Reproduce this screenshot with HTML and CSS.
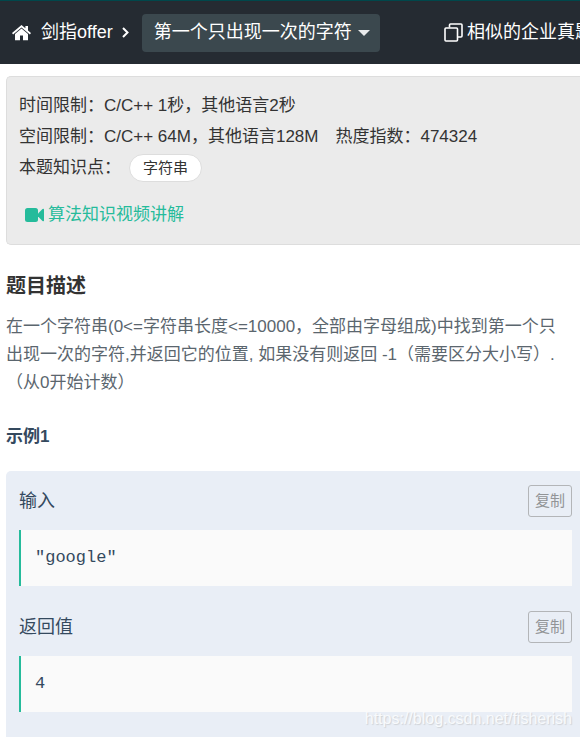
FILE: index.html
```html
<!DOCTYPE html>
<html lang="zh-CN">
<head>
<meta charset="utf-8">
<meta name="viewport" content="width=device-width, initial-scale=1">
<title>第一个只出现一次的字符</title>
<link rel="stylesheet" href="styles.css">
</head>
<body>
<header class="topbar">
  <a class="home" href="#" aria-label="首页">
    <svg width="19" height="16" viewBox="0 0 19 16" fill="#fff"><path d="M9.500 0 0 8l1.100 1.400L9.500 2.500l8.400 6.900L19 8l-3-2.500V1h-2.600v2.300z"/><path d="M9.500 3.600 3 9v6.200h5v-4.700h3v4.700h5V9z"/></svg>
  </a>
  <a class="crumb" href="#">剑指offer</a>
  <svg class="chevron" width="7" height="11" viewBox="0 0 7 11" fill="none" stroke="#fff" stroke-width="2"><path d="M1 1l4.500 4.500L1 10"/></svg>
  <button class="picker" type="button">第一个只出现一次的字符<span class="caret"></span></button>
  <a class="similar" href="#">
    <svg width="19" height="19" viewBox="0 0 19 19" fill="none" stroke="#fff" stroke-width="1.600"><rect x="1" y="5" width="12.500" height="13" rx="1"/><path d="M5.500 4.500V2q0-1 1-1H17q1 0 1 1v11q0 1-1 1h-3"/></svg>
    相似的企业真题
  </a>
</header>
<main>
  <section class="info">
    <p>时间限制：C/C++ 1秒，其他语言2秒</p>
    <p class="limits"><span>空间限制：C/C++ 64M，其他语言128M</span><span>热度指数：474324</span></p>
    <p class="topics">本题知识点：<a class="tag" href="#">字符串</a></p>
    <a class="video" href="#">
      <svg width="19" height="14" viewBox="0 0 19 14" fill="#25bb9b"><rect width="13" height="14" rx="2.500"/><path d="M13 5.500 17.500 1q1.500-.8 1.500.500v11q0 1.300-1.500.500L13 8.500z"/></svg>
      算法知识视频讲解
    </a>
  </section>
  <h1>题目描述</h1>
  <p class="description">在一个字符串(0&lt;=字符串长度&lt;=10000，全部由字母组成)中找到第一个只<br>出现一次的字符,并返回它的位置, 如果没有则返回 -1（需要区分大小写）.<br>（从0开始计数）</p>
  <h2>示例1</h2>
  <section class="sample">
    <div class="sample-head"><h3>输入</h3><button class="copy" type="button">复制</button></div>
    <pre>"google"</pre>
    <div class="sample-head"><h3>返回值</h3><button class="copy" type="button">复制</button></div>
    <pre>4</pre>
    <span class="watermark">https://blog.csdn.net/fisherish</span>
  </section>
</main>
</body>
</html>
```
FILE: styles.css
```css
* {
  box-sizing: border-box;
}

body {
  margin: 0;
  background: #fff;
  color: #333;
  font: 17px/31px "Liberation Sans", "Noto Sans CJK SC", sans-serif;
}

h1, h2, h3, p, pre {
  margin: 0;
}

a {
  color: inherit;
  text-decoration: none;
}

svg {
  display: block;
  flex: none;
}

.topbar {
  display: flex;
  align-items: center;
  height: 64px;
  padding: 0 0 0 12px;
  overflow: hidden;
  border-top: 1px solid #00474b;
  background: #252b32;
  color: #fff;
  font-size: 18px;
  white-space: nowrap;
}

.crumb {
  margin-left: 10px;
}

.chevron {
  margin: 0 13px 0 9px;
}

.picker {
  display: flex;
  align-items: center;
  gap: 6px;
  height: 38px;
  padding: 0 10px 0 12px;
  border: 0;
  border-radius: 4px;
  background: #3b484e;
  color: #fff;
  font: inherit;
}

.caret {
  border: 6px solid transparent;
  border-top-color: #e8eaeb;
  border-bottom: 0;
}

.similar {
  display: flex;
  align-items: center;
  gap: 4px;
  margin-left: auto;
  margin-right: -13px;
}

main {
  padding: 12px 0 0 6px;
}

.info {
  padding: 13px 12px 14px;
  border: 1px solid #ddd;
  border-right: 0;
  border-radius: 5px 0 0 5px;
  background: #ebebeb;
}

.limits {
  display: flex;
  gap: 17px;
}

.topics {
  display: flex;
  align-items: center;
  gap: 8px;
}

.tag {
  padding: 0 13px;
  border: 1px solid #ddd;
  border-radius: 14px;
  background: #fff;
  font-size: 15px;
  line-height: 26px;
}

.video {
  display: flex;
  align-items: center;
  gap: 4px;
  margin: 16px 0 0 6px;
  color: #25bb9b;
}

h1 {
  margin-top: 25px;
  font-size: 20px;
  line-height: 32px;
}

.description {
  margin-top: 11px;
  color: #5b666e;
  line-height: 28px;
  white-space: nowrap;
}

h2 {
  margin: 24px 0 18px;
  color: #34495e;
  font-size: 17px;
  line-height: 32px;
}

.sample {
  position: relative;
  padding: 14px 8px 25px 13px;
  border-radius: 5px 0 0 0;
  background: #e9eef6;
  color: #34495e;
}

.sample-head {
  display: flex;
  align-items: center;
  justify-content: space-between;
}

h3 {
  font-size: 18px;
  font-weight: normal;
  line-height: 32px;
}

.copy {
  height: 32px;
  padding: 0 6px 3px;
  border: 1px solid #b3b5b8;
  border-radius: 3px;
  background: transparent;
  color: #929497;
  font: 15px "Liberation Sans", "Noto Sans CJK SC", sans-serif;
}

pre {
  margin-top: 13px;
  padding: 12px 14px;
  border-left: 2px solid #25bb9b;
  background: #fafafa;
  font: 17px/32px "Liberation Mono", monospace;
}

pre + .sample-head {
  margin-top: 25px;
}

.watermark {
  position: absolute;
  right: 8px;
  bottom: 8px;
  color: #f8fafc;
  font-size: 16px;
  line-height: 20px;
  text-shadow: 1px 1px 1px #cfd2d6;
}
```
